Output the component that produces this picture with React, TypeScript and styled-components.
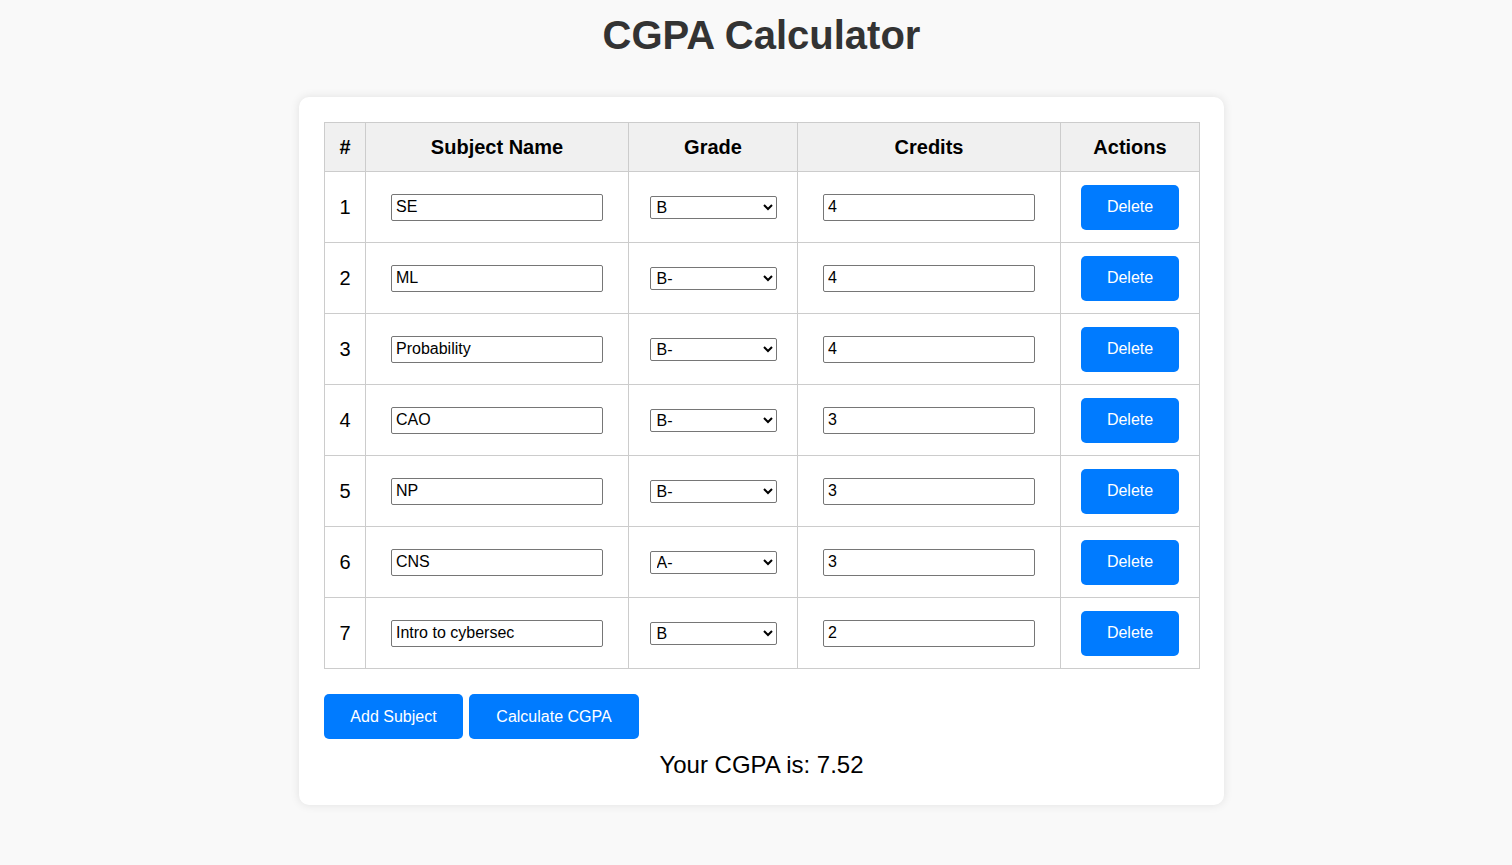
import { useState } from 'react';
import styled, { createGlobalStyle } from 'styled-components';

const GRADE_POINTS: Record<string, number> = {
	A: 10,
	'A-': 9,
	B: 8,
	'B-': 7,
	C: 6,
	'C-': 5,
	D: 4,
	F: 0,
};

type Subject = {
	id: number;
	name: string;
	grade: string;
	credits: string;
};

const initialSubjects: Subject[] = [
	{ id: 1, name: 'SE', grade: 'B', credits: '4' },
	{ id: 2, name: 'ML', grade: 'B-', credits: '4' },
	{ id: 3, name: 'Probability', grade: 'B-', credits: '4' },
	{ id: 4, name: 'CAO', grade: 'B-', credits: '3' },
	{ id: 5, name: 'NP', grade: 'B-', credits: '3' },
	{ id: 6, name: 'CNS', grade: 'A-', credits: '3' },
	{ id: 7, name: 'Intro to cybersec', grade: 'B', credits: '2' },
];

const App = () => {
	const [subjects, setSubjects] = useState<Subject[]>(initialSubjects);
	const [cgpa, setCgpa] = useState<string | null>('7.52');

	const updateSubject = (id: number, field: keyof Subject, value: string) => {
		setSubjects((list) => list.map((s) => (s.id === id ? { ...s, [field]: value } : s)));
	};

	const deleteSubject = (id: number) => {
		setSubjects((list) => list.filter((s) => s.id !== id));
	};

	const addSubject = () => {
		const nextId = subjects.length ? Math.max(...subjects.map((s) => s.id)) + 1 : 1;
		setSubjects([...subjects, { id: nextId, name: '', grade: 'A', credits: '' }]);
	};

	const calculate = () => {
		let total = 0;
		let credits = 0;
		subjects.forEach((s) => {
			const c = parseFloat(s.credits) || 0;
			total += (GRADE_POINTS[s.grade] ?? 0) * c;
			credits += c;
		});
		setCgpa(credits ? (total / credits).toFixed(2) : '0.00');
	};

	return (
		<>
			<GlobalStyle />
			<Page>
				<Title>CGPA Calculator</Title>
				<Card>
					<Table>
						<colgroup>
							<col style={{ width: 41 }} />
							<col style={{ width: 263 }} />
							<col style={{ width: 169 }} />
							<col style={{ width: 263 }} />
							<col style={{ width: 139 }} />
						</colgroup>
						<thead>
							<tr>
								<Th>#</Th>
								<Th>Subject Name</Th>
								<Th>Grade</Th>
								<Th>Credits</Th>
								<Th>Actions</Th>
							</tr>
						</thead>
						<tbody>
							{subjects.map((s, i) => (
								<tr key={s.id}>
									<Td>{i + 1}</Td>
									<Td>
										<TextInput
											type='text'
											value={s.name}
											onChange={(e) => updateSubject(s.id, 'name', e.target.value)}
										/>
									</Td>
									<Td>
										<GradeSelect
											value={s.grade}
											onChange={(e) => updateSubject(s.id, 'grade', e.target.value)}
										>
											{Object.keys(GRADE_POINTS).map((g) => (
												<option key={g} value={g}>
													{g}
												</option>
											))}
										</GradeSelect>
									</Td>
									<Td>
										<TextInput
											type='text'
											value={s.credits}
											onChange={(e) => updateSubject(s.id, 'credits', e.target.value)}
										/>
									</Td>
									<Td>
										<Button width={98} onClick={() => deleteSubject(s.id)}>
											Delete
										</Button>
									</Td>
								</tr>
							))}
						</tbody>
					</Table>
					<ButtonRow>
						<Button width={139} onClick={addSubject}>
							Add Subject
						</Button>
						<Button width={170} onClick={calculate}>
							Calculate CGPA
						</Button>
					</ButtonRow>
					{cgpa !== null && <Result>Your CGPA is: {cgpa}</Result>}
				</Card>
			</Page>
		</>
	);
};

export default App;

const GlobalStyle = createGlobalStyle`
	html, body {
		margin: 0;
		padding: 0;
		background-color: #f9f9f9;
		font-family: "Liberation Sans", Arial, sans-serif;
	}
`;

const Page = styled.div`
	min-height: 865px;
	display: flex;
	flex-direction: column;
	align-items: center;
	padding: 12px 0 0 11px;
	box-sizing: border-box;
`;

const Title = styled.h1`
	margin: 0 0 39px;
	font-size: 40px;
	font-weight: 700;
	color: #333;
	line-height: 46px;
`;

const Card = styled.div`
	width: 925px;
	box-sizing: border-box;
	padding: 25px 25px 26px;
	background-color: #fff;
	border-radius: 10px;
	box-shadow: 0 0 10px rgba(0, 0, 0, 0.1);
	display: flex;
	flex-direction: column;
`;

const Table = styled.table`
	width: 875px;
	table-layout: fixed;
	border-collapse: collapse;
`;

const Th = styled.th`
	height: 48px;
	padding: 0;
	border: 1px solid #ccc;
	background-color: #f0f0f0;
	font-size: 20px;
	font-weight: 700;
	color: #000;
	text-align: center;
	vertical-align: middle;
`;

const Td = styled.td`
	height: 70px;
	padding: 0;
	border: 1px solid #ccc;
	font-size: 20px;
	color: #000;
	text-align: center;
	vertical-align: middle;
`;

const TextInput = styled.input`
	display: block;
	margin: 0 auto;
	width: 212px;
	height: 27px;
	box-sizing: border-box;
	padding: 2px 4px;
	border: 1px solid #767676;
	border-radius: 2px;
	font-family: "Liberation Sans", Arial, sans-serif;
	font-size: 16px;
	color: #000;
	background: #fff;
`;

const GradeSelect = styled.select`
	display: block;
	margin: 0 auto;
	width: 127px;
	height: 23px;
	box-sizing: border-box;
	padding: 0 2px;
	border: 1px solid #767676;
	border-radius: 2px;
	font-family: "Liberation Sans", Arial, sans-serif;
	font-size: 16px;
	color: #000;
	background: #fff;
`;

const Button = styled.button<{ width: number }>`
	width: ${(props) => props.width}px;
	height: 45px;
	margin: 0 auto;
	padding: 0;
	border: none;
	border-radius: 5px;
	background-color: #007bff;
	color: #fff;
	font-family: "Liberation Sans", Arial, sans-serif;
	font-size: 16px;
	cursor: pointer;
	&:hover {
		background-color: #0069d9;
	}
`;

const ButtonRow = styled.div`
	display: flex;
	gap: 6px;
	margin-top: 25px;
	& > button {
		margin: 0;
	}
`;

const Result = styled.p`
	margin: 12px 0 0;
	font-size: 24px;
	line-height: 28px;
	color: #000;
	text-align: center;
`;
